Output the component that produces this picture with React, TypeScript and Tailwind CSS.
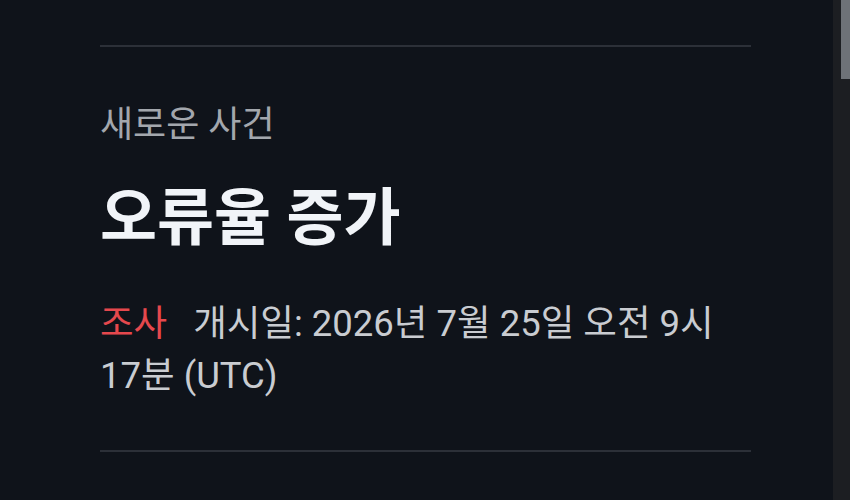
const font = { fontFamily: "Roboto, 'Noto Sans CJK KR', sans-serif" };

// Incident summary card with a fake scroll rail on the right edge
export default function App() {
  return (
    <div className="flex h-[500px] w-[850px] overflow-hidden bg-[#0f131a]" style={font}>
      <main className="flex-1 pl-[100px] pr-[82px]">
        <div className="mt-[45px] h-[2px] bg-[#2c3038]" />
        <section className="pt-[56px] pb-[48px]">
          <p className="text-[36px] leading-[44px] text-[#a3a7ad]">새로운 사건</p>
          <h1 className="mt-[37px] text-[62px] font-bold leading-[70px] text-[#f1f4f8]">오류율 증가</h1>
          <p className="mt-[44px] text-[36.5px] leading-[52px] text-[#c9ccd1]">
            <span className="mr-[26px] text-[#e5484d]">조사</span>
            <span>개시일: 2026년 7월 25일 오전 9시</span>{" "}
            <span>17분 (UTC)</span>
          </p>
        </section>
        <div className="h-[2px] bg-[#2c3038]" />
      </main>
      <div className="w-[17px] bg-[#1c1e22] pl-[8px]">
        <div className="h-[79px] bg-[#6e7278]" />
      </div>
    </div>
  );
}
